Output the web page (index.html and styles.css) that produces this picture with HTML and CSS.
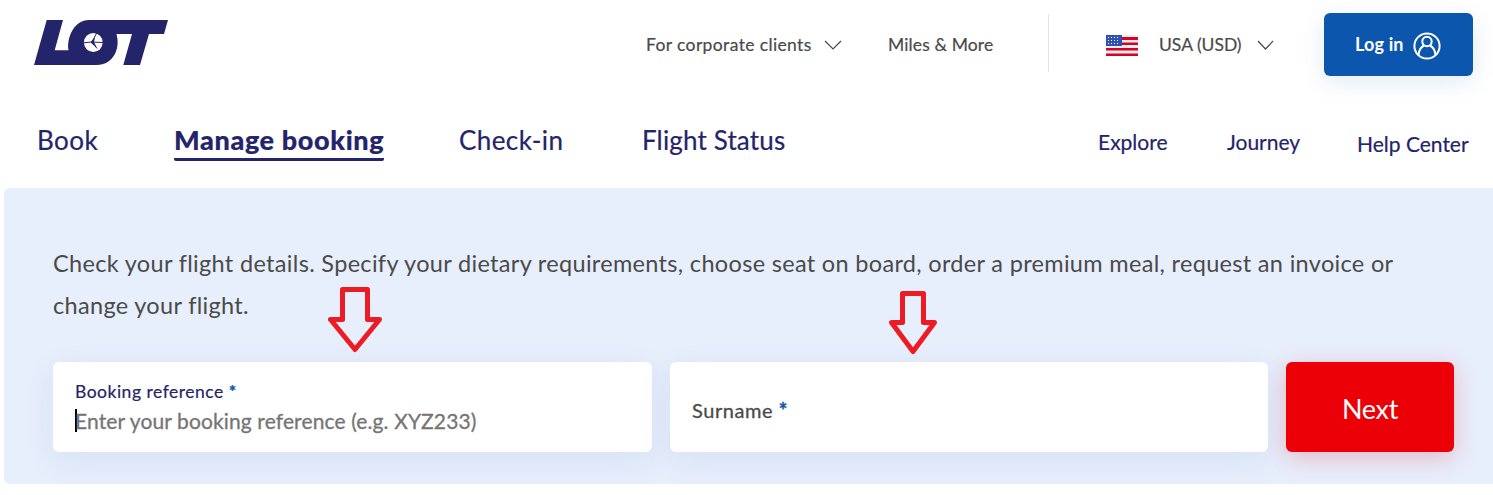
FILE: index.html
```html
<!DOCTYPE html>
<html lang="en">
<head>
<meta charset="utf-8">
<title>LOT - Manage booking</title>
<link rel="stylesheet" href="styles.css">
</head>
<body>
<header class="top">
  <a class="logo" aria-label="LOT">
    <svg width="134" height="45" viewBox="14 15 134 45">
      <path fill="#24246a" d="M26.7 15H43L34.7 45.3H48.5C46.5 33 54 15 69 15H148L144 29H129L120 60H103.3L112 29H96.5C101 45 92 60 77 60H14Z"/>
      <circle cx="73.3" cy="37.5" r="9.4" fill="#fff"/>
      <path fill="none" stroke="#24246a" stroke-width="1" d="M64 37.8 71 37l12 .5M72 37l4.700-9M72 37l5 6.500"/>
      <path fill="#24246a" d="m71 36.500 4-4-1 4.500 3 6-6-5z"/>
    </svg>
  </a>
  <a class="small corp">For corporate clients</a>
  <svg class="chev" width="18" height="10" viewBox="0 0 18 10"><path d="M1 1 9 9 17 1"/></svg>
  <a class="small miles">Miles &amp; More</a>
  <span class="divider"></span>
  <svg class="flag" width="32" height="21" viewBox="0 0 32 21">
    <path fill="#efefef" d="M0 0h32v21H0z"/>
    <path fill="#d80027" d="M16 2h16v3H16zM16 7.500h16V10H16zM0 13h32v2.500H0zM0 18.500h32V21H0z"/>
    <path fill="#2e52b2" d="M0 0h16v11H0z"/>
    <path stroke="#fff" stroke-width="1" stroke-dasharray="1 2" d="M2 2.500h12M2 5.500h12M2 8.500h12"/>
  </svg>
  <a class="small usd">USA (USD)</a>
  <svg class="chev" width="17" height="10" viewBox="0 0 17 10"><path d="M1 1 8.500 9 16 1"/></svg>
  <button class="login"><span>Log in</span>
    <svg width="28" height="28" viewBox="0 0 28 28" fill="none" stroke="#fff" stroke-width="2">
      <circle cx="14" cy="14" r="12.600"/><circle cx="14" cy="9.500" r="4.700"/>
      <path d="M5.500 23C6 16.500 9 14.500 11 13.500M22.500 23C22 16.500 19 14.500 17 13.500"/>
    </svg>
  </button>
</header>
<nav class="nav">
  <a class="main book">Book</a>
  <a class="main active">Manage booking</a>
  <a class="main check">Check-in</a>
  <a class="main status">Flight Status</a>
  <a class="side explore">Explore</a>
  <a class="side journey">Journey</a>
  <a class="side help">Help Center</a>
</nav>
<main class="panel">
  <p class="intro"><span class="line1">Check your flight details. Specify your dietary requirements, choose seat on board, order a premium meal, request an invoice or</span><br><span class="line2">change your flight.</span></p>
  <form class="form">
    <label class="field">
      <span class="label">Booking reference <b>*</b></span>
      <span class="entry"><i class="caret"></i><span class="placeholder">Enter your booking reference (e.g. XYZ233)</span></span>
    </label>
    <label class="field single"><span class="surname">Surname <b>*</b></span></label>
    <button class="next" type="button"><span>Next</span></button>
  </form>
  <svg class="arrow first" width="54" height="66" viewBox="0 0 54 66"><path d="M14.500 2.500h25v30h12L27 62.500 2.500 32.500h12z"/></svg>
  <svg class="arrow second" width="48" height="64" viewBox="0 0 48 64"><path d="M13.500 2.500h21v29h11L24 60.500 2.500 31.500h11z"/></svg>
</main>
</body>
</html>
```
FILE: styles.css
```css
* { box-sizing: border-box; }
body { margin: 0; width: 1493px; height: 495px; overflow: hidden; background: #fff; font-family: Lato, "Open Sans", sans-serif; color: #4a4a4a; }
a, span { white-space: nowrap; }
button { border: 0; font-family: inherit; color: #fff; }
.top { display: grid; grid-template-columns: 612px 178px 64px 160px 58px 53px 98px 67px 149px; align-items: center; height: 89px; padding: 0 0 0 34px; }
.logo { align-self: start; padding-top: 20px; height: 65px; }
.logo svg { display: block; }
.small { font-size: 17.5px; line-height: 24px; -webkit-text-stroke: .2px currentColor; padding-top: 1px; }
.corp { letter-spacing: .37px; }
.miles { letter-spacing: .12px; }
.flag { margin-top: 1px; }
.chev { fill: none; stroke: #4a4a4a; stroke-width: 1.2; }
.divider { width: 1px; height: 58px; margin-top: -4px; background: #e3e3e3; }
.login { display: flex; align-items: center; gap: 9px; width: 149px; height: 63px; padding: 0 0 2px 31px; border-radius: 6px; background: #0c57ad; box-shadow: 0 6px 24px rgba(12, 87, 173, .12); font-size: 18px; font-weight: 700; letter-spacing: .15px; }
.login svg { position: relative; top: 2px; }
.nav { display: grid; grid-template-columns: 137px 285px 183px 456px 129px 130px 130px; height: 99px; padding: 31px 0 0 37px; color: #24246a; align-items: start; }
.main { font-size: 26px; line-height: 40px; justify-self: start; -webkit-text-stroke: .2px currentColor; }
.book { letter-spacing: .5px; }
.check { letter-spacing: .42px; }
.status { letter-spacing: .15px; }
.active { height: 41px; font-size: 27px; line-height: 39px; font-weight: 900; letter-spacing: .64px; border-bottom: 3px solid #24246a; border-radius: 2px; }
.side { font-size: 21px; line-height: 44px; -webkit-text-stroke: .2px currentColor; }
.help { padding-top: 2px; }
.panel { position: relative; height: 296px; margin-left: 4px; padding: 54px 39px 0 49px; border-radius: 6px 0 0 6px; background: #e7eefc; overflow: hidden; }
.intro { margin: 0; font-size: 23.5px; line-height: 42px; height: 120px; letter-spacing: .322px; }
.form { display: grid; grid-template-columns: 599px 598px 168px; gap: 18px; height: 90px; }
.field { display: flex; flex-direction: column; padding: 18px 22px 0; border-radius: 6px; background: #fff; box-shadow: 0 8px 32px rgba(12, 87, 150, .08); }
.field b { color: #0c57ad; font-weight: 900; }
.label { font-size: 17.5px; line-height: 24px; color: #24246a; letter-spacing: .5px; -webkit-text-stroke: .2px currentColor; }
.entry { display: flex; align-items: center; height: 32px; font-size: 21px; letter-spacing: .12px; color: #757575; -webkit-text-stroke: .3px currentColor; }
.caret { width: 2px; height: 23px; margin-right: -2px; background: #000; }
.single { justify-content: center; padding-top: 6px; }
.surname { font-size: 20px; letter-spacing: .55px; -webkit-text-stroke: .3px currentColor; }
.next { border-radius: 6px; background: #ec0008; box-shadow: 0 6px 24px rgba(236, 0, 8, .22); font-size: 27px; letter-spacing: -.3px; padding: 2px 0 0; }
.arrow { position: absolute; fill: none; stroke: #ed1c24; stroke-width: 5; stroke-linejoin: round; }
.first { left: 324px; top: 99px; }
.second { left: 885px; top: 103px; }
```
